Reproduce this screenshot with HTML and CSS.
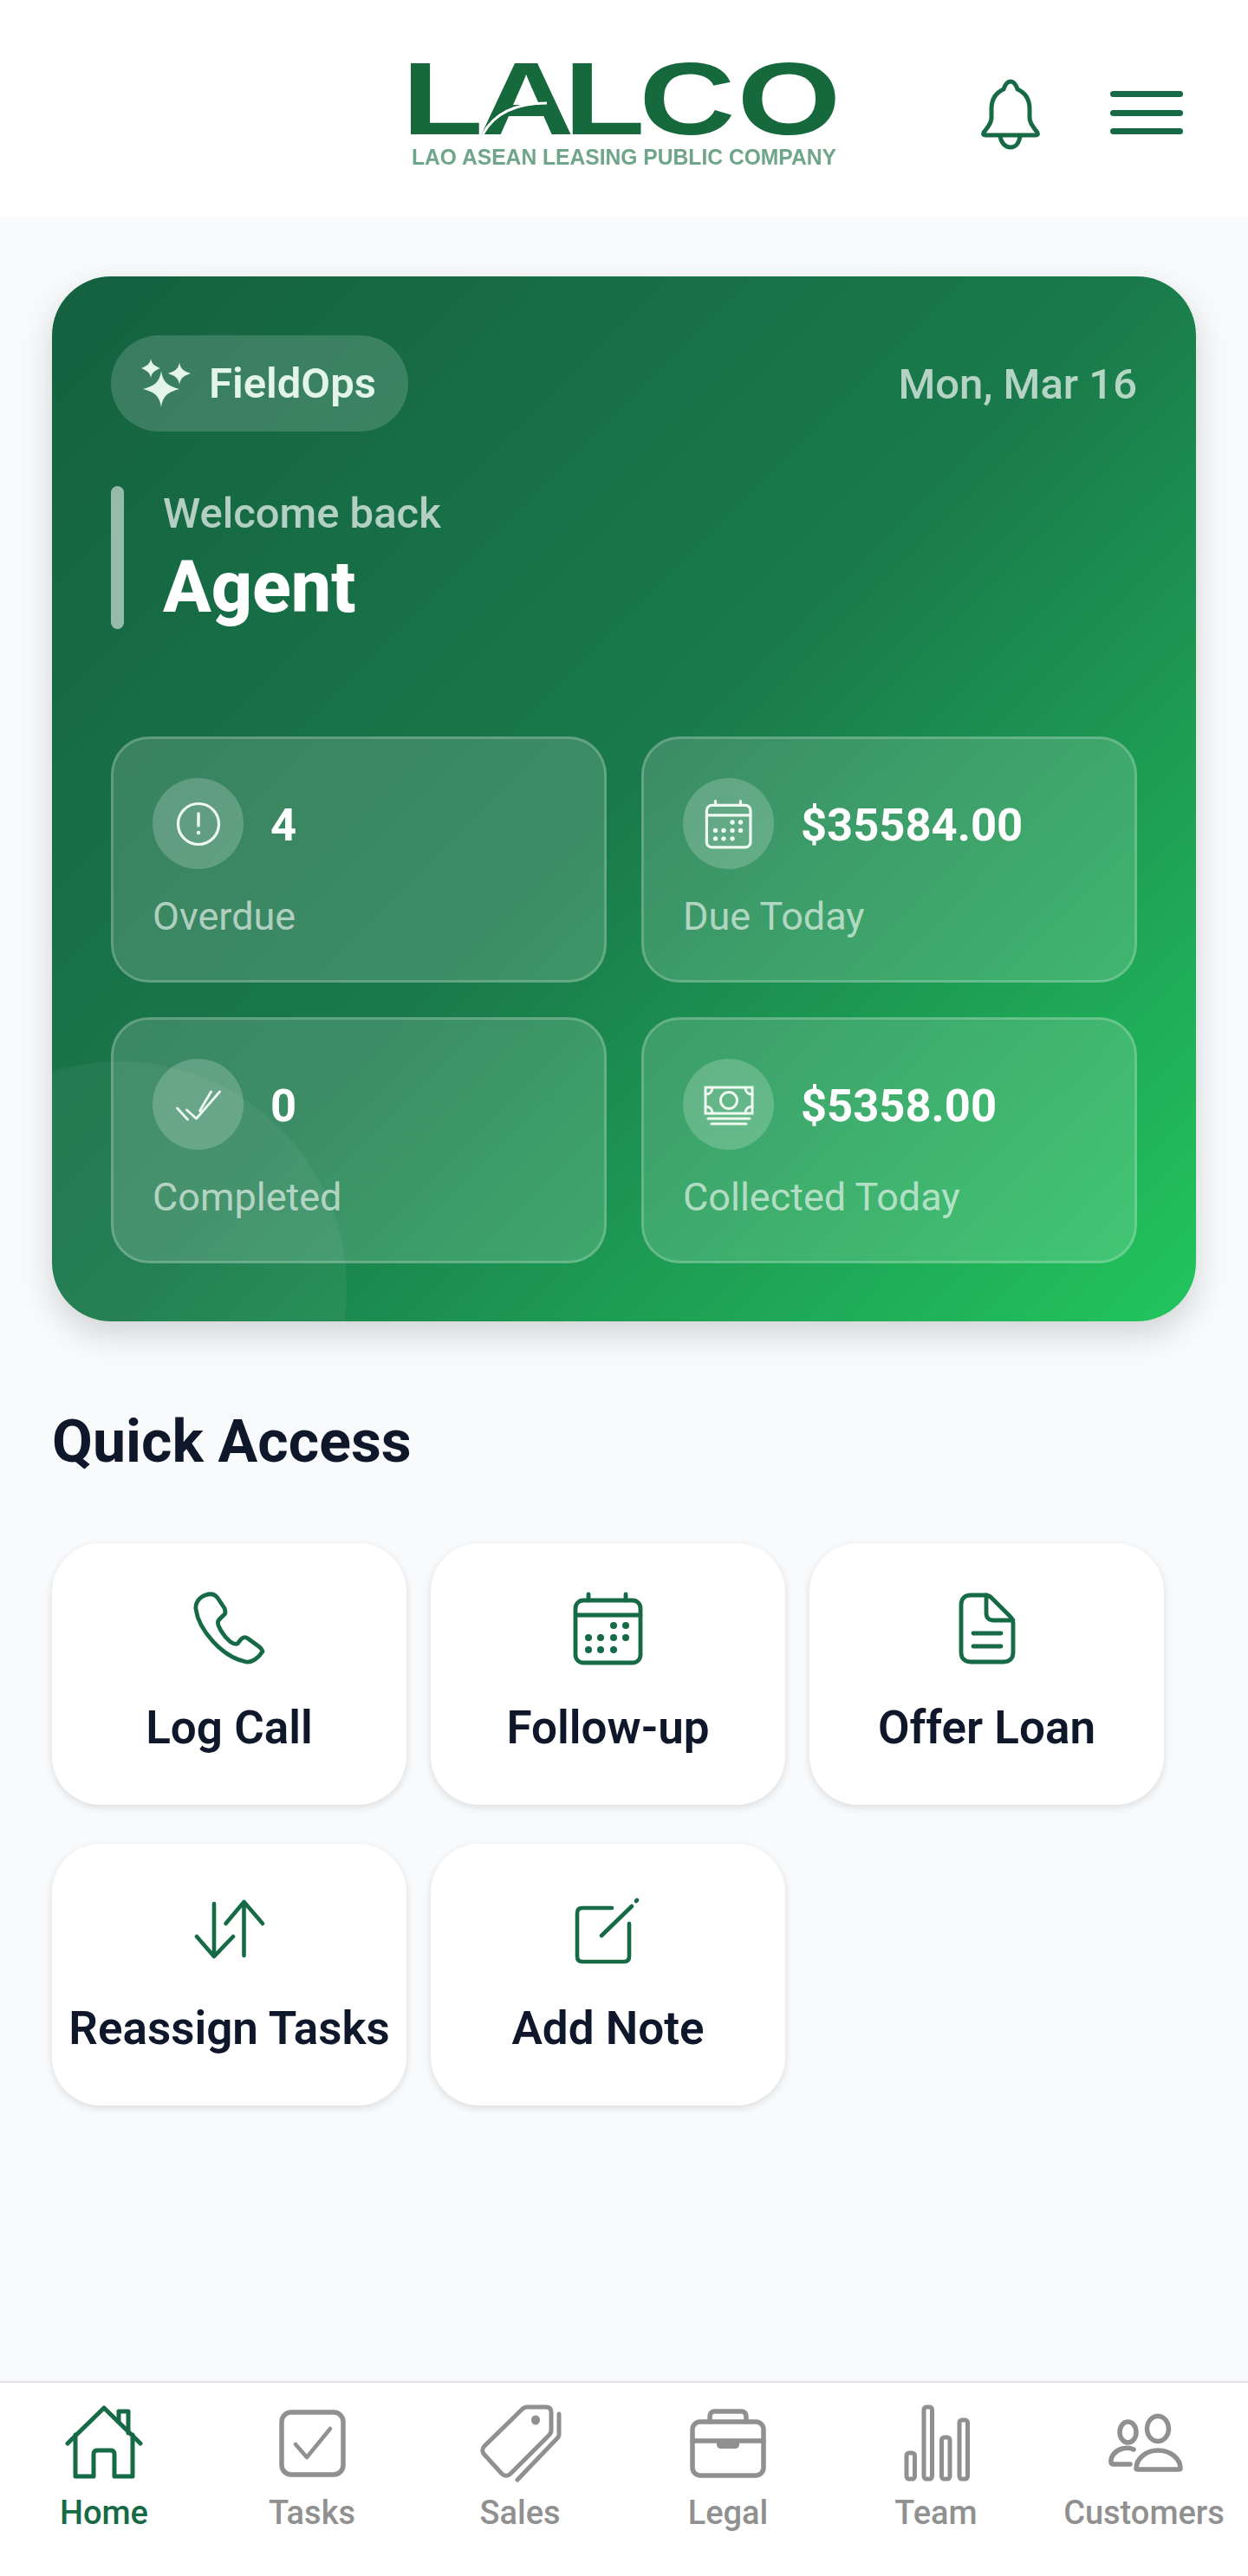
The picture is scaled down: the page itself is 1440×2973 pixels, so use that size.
FILE: index.html
```html
<!DOCTYPE html>
<html lang="en">
<head>
    <meta charset="UTF-8">
    <meta name="viewport" content="width=device-width, initial-scale=1.0">
    <title>LALCO FieldOps</title>
    <link rel="stylesheet" href="styles.css">
</head>
<body>
    <svg class="defs" width="0" height="0" aria-hidden="true">
        <symbol id="calendar" viewBox="0 0 92 92">
            <rect x="8" y="14" width="75" height="72" rx="9" fill="none" stroke="currentColor" stroke-width="4.8"/>
            <path d="M8 31H83M23 7V14M66 7V14" fill="none" stroke="currentColor" stroke-width="4.8" stroke-linecap="round"/>
            <g fill="currentColor">
                <circle cx="52" cy="43" r="4"/><circle cx="66" cy="43" r="4"/>
                <circle cx="23" cy="57" r="4"/><circle cx="37" cy="57" r="4"/><circle cx="52" cy="57" r="4"/><circle cx="66" cy="57" r="4"/>
                <circle cx="23" cy="71" r="4"/><circle cx="37" cy="71" r="4"/><circle cx="52" cy="71" r="4"/>
            </g>
        </symbol>
    </svg>

    <!-- Top bar -->
    <header class="topbar">
        <svg class="logo" viewBox="0 -30 490 160" width="490" height="160" role="img" aria-label="LALCO">
            <text class="logo-name" transform="scale(1.3 1)" x="-8.600 59 135 202 289" y="84">LALCO</text>
            <path d="M82 84C95 60 120 48 156 48" fill="none" stroke="#fff" stroke-width="3"/>
            <text class="logo-sub" x="0" y="119" textLength="490" lengthAdjust="spacingAndGlyphs">LAO ASEAN LEASING PUBLIC COMPANY</text>
        </svg>
        <svg class="bell" viewBox="0 0 70 84" width="70" height="84" fill="none" stroke="currentColor" stroke-width="5" stroke-linecap="round" stroke-linejoin="round">
            <path d="M35 4C31 4 29 7 27 13C18 17 13 24 13 36V46C13 53 8 57 4 63C3 65 4 66 6 66H64C66 66 67 65 66 63C62 57 57 53 57 46V36C57 24 52 17 43 13C41 7 39 4 35 4Z"/>
            <path d="M23 67C24 75 29 80 35 80C41 80 45 75 46 67"/>
        </svg>
        <div class="burger"><span></span><span></span><span></span></div>
    </header>

    <main class="content">
        <!-- Summary card -->
        <section class="hero">
            <div class="hero-top">
                <div class="pill">
                    <svg viewBox="0 0 60 60" width="60" height="60" fill="currentColor">
                        <path d="M23 15C25 27 29 32 44 36C29 40 25 45 23 57C21 45 17 40 2 36C17 32 21 27 23 15Z"/>
                        <path d="M44 5C45 12 48 15 57 18C48 21 45 24 44 31C43 24 40 21 31 18C40 15 43 12 44 5Z"/>
                        <path d="M11 1C12 7 15 9 22 12C15 15 12 17 11 23C10 17 7 15 0 12C7 9 10 7 11 1Z"/>
                    </svg>
                    <span>FieldOps</span>
                </div>
                <div class="date">Mon, Mar 16</div>
            </div>

            <div class="welcome">
                <div class="welcome-bar"></div>
                <div>
                    <div class="welcome-label">Welcome back</div>
                    <div class="welcome-name">Agent</div>
                </div>
            </div>

            <div class="stats">
                <div class="stat">
                    <div class="stat-row">
                        <div class="stat-icon">
                            <svg viewBox="0 0 60 60" width="60" height="60" fill="none" stroke="currentColor" stroke-width="3.2" stroke-linecap="round">
                                <circle cx="30" cy="30" r="23.5"/>
                                <path d="M30 18V32" stroke-width="3.5"/>
                                <circle cx="30" cy="40" r="1.5" fill="currentColor" stroke-width="1.5"/>
                            </svg>
                        </div>
                        <div class="stat-value">4</div>
                    </div>
                    <div class="stat-label">Overdue</div>
                </div>
                <div class="stat">
                    <div class="stat-row">
                        <div class="stat-icon">
                            <svg width="62" height="62"><use href="#calendar"/></svg>
                        </div>
                        <div class="stat-value">$35584.00</div>
                    </div>
                    <div class="stat-label">Due Today</div>
                </div>
                <div class="stat">
                    <div class="stat-row">
                        <div class="stat-icon">
                            <svg viewBox="0 0 60 60" width="60" height="60" fill="none" stroke="currentColor" stroke-width="2.8" stroke-linecap="round" stroke-linejoin="round">
                                <path d="M5.5 34L17.5 47M16.5 36L27.5 46L54.5 15M31.5 37L44.5 15"/>
                            </svg>
                        </div>
                        <div class="stat-value">0</div>
                    </div>
                    <div class="stat-label">Completed</div>
                </div>
                <div class="stat">
                    <div class="stat-row">
                        <div class="stat-icon">
                            <svg viewBox="0 0 60 60" width="60" height="60" fill="none" stroke="currentColor" stroke-width="3" stroke-linecap="round">
                                <rect x="3" y="10" width="54" height="30"/>
                                <circle cx="30" cy="25" r="9.5"/>
                                <path d="M3 18C8 18 11 15 11 10M57 18C52 18 49 15 49 10M3 32C8 32 11 35 11 40M57 32C52 32 49 35 49 40"/>
                                <path d="M6 46H54M10 52H50"/>
                            </svg>
                        </div>
                        <div class="stat-value">$5358.00</div>
                    </div>
                    <div class="stat-label">Collected Today</div>
                </div>
            </div>
        </section>

        <h2 class="section-title">Quick Access</h2>

        <div class="tiles">
            <div class="tile">
                <svg viewBox="0 0 92 92" width="92" height="92" fill="none" stroke="currentColor" stroke-width="4.8" stroke-linejoin="round">
                    <path d="M18 8C11 10 6 17 7 24C10 47 36 79 65 85C71 86 79 81 84 73C83 70 81 68 78 66L67 58C64 56 62 56 59 59L55 64C52 65 50 64 47 62C41 57 36 50 33 43C32 40 32 38 34 36L39 31C42 29 41 26 40 23L32 11C28 6 23 6 18 8Z"/>
                </svg>
                <span>Log Call</span>
            </div>
            <div class="tile">
                <svg width="92" height="92"><use href="#calendar"/></svg>
                <span>Follow-up</span>
            </div>
            <div class="tile">
                <svg viewBox="0 0 92 92" width="92" height="92" fill="none" stroke="currentColor" stroke-width="4.8" stroke-linecap="round" stroke-linejoin="round">
                    <path d="M27 8H44C47 8 49 9 51 11L72 32C75 35 76 37 76 40V74C76 81 72 85 65 85H27C20 85 16 81 16 74V19C16 12 20 8 27 8Z"/>
                    <path d="M45 8V29C45 34 48 37 53 37H76"/>
                    <path d="M30 52H62M30 67H62"/>
                </svg>
                <span>Offer Loan</span>
            </div>
            <div class="tile">
                <svg viewBox="0 0 92 92" width="92" height="92" fill="none" stroke="currentColor" stroke-width="4.6" stroke-linecap="round" stroke-linejoin="round">
                    <path d="M28 17V78M8 55L28 78L50 55"/>
                    <path d="M62.5 15V77M41.5 40L62.5 15L84 40"/>
                </svg>
                <span>Reassign Tasks</span>
            </div>
            <div class="tile">
                <svg viewBox="0 0 92 92" width="92" height="92" fill="none" stroke="currentColor" stroke-width="4.6" stroke-linecap="round" stroke-linejoin="round">
                    <path d="M50 22H16C12 22 10 24 10 28V78C10 82 12 84 16 84H64C68 84 70 82 70 78V40"/>
                    <path d="M38 54L73 20M78 14L79 13"/>
                </svg>
                <span>Add Note</span>
            </div>
        </div>
    </main>

    <!-- Bottom navigation -->
    <nav class="bottom-nav">
        <div class="nav-item active">
            <svg viewBox="0 0 96 96" width="96" height="96" fill="none" stroke="currentColor" stroke-width="5" stroke-linecap="round" stroke-linejoin="round">
                <path d="M6 48L48 7L90 48"/>
                <path d="M15 38V86H36V60C36 57 38 56 40 56H56C58 56 60 57 60 60V86H81V38"/>
                <path d="M65 23V11H76V36"/>
            </svg>
            <span>Home</span>
        </div>
        <div class="nav-item">
            <svg viewBox="0 0 96 96" width="96" height="96" fill="none" stroke="currentColor" stroke-width="5.500" stroke-linecap="round" stroke-linejoin="round">
                <rect x="13" y="12" width="71" height="72" rx="11"/>
                <path d="M29 49L42 64L69 31" stroke-width="4.500"/>
            </svg>
            <span>Tasks</span>
        </div>
        <div class="nav-item">
            <svg viewBox="0 0 96 96" width="96" height="96" fill="none" stroke="currentColor" stroke-width="5" stroke-linecap="round" stroke-linejoin="round">
                <path d="M56 6H78C82 6 84 8 84 12V33C84 36 83 37 81 39L37 83C34 86 30 86 27 83L7 61C4 58 4 54 7 51L50 9C52 7 54 6 56 6Z"/>
                <ellipse cx="66" cy="21" rx="5" ry="5.500" fill="currentColor" stroke="none"/>
                <path d="M93 14V38C93 40 92 41 91 42L45 90"/>
            </svg>
            <span>Sales</span>
        </div>
        <div class="nav-item">
            <svg viewBox="0 0 96 96" width="96" height="96" fill="none" stroke="currentColor" stroke-width="5.500" stroke-linecap="round" stroke-linejoin="round">
                <rect x="7" y="23" width="82" height="62" rx="9"/>
                <path d="M27 23V18C27 13 29 11 33 11H63C67 11 69 13 69 18V23"/>
                <path d="M7 45H89"/>
                <path d="M36 45H60V49C60 52 58 53 56 53H40C38 53 36 52 36 49Z" fill="currentColor" stroke-width="2"/>
            </svg>
            <span>Legal</span>
        </div>
        <div class="nav-item">
            <svg viewBox="0 0 96 96" width="96" height="96" fill="none" stroke="currentColor" stroke-width="5" stroke-linejoin="round">
                <rect x="14" y="59" width="9.500" height="30" rx="3"/>
                <rect x="34" y="6" width="9.500" height="83" rx="3"/>
                <rect x="54.500" y="41" width="9.500" height="48" rx="3"/>
                <rect x="75" y="21" width="9.500" height="68" rx="3"/>
            </svg>
            <span>Team</span>
        </div>
        <div class="nav-item">
            <svg viewBox="0 0 96 96" width="96" height="96" fill="none" stroke="currentColor" stroke-width="5.500" stroke-linecap="round" stroke-linejoin="round">
                <ellipse cx="29.500" cy="35" rx="9.500" ry="12"/>
                <ellipse cx="64" cy="31" rx="12.500" ry="14.500"/>
                <path d="M36 55C32 53 27 53 23 54C15 56 9 63 10 70C10 71 11 72 12 72H32"/>
                <path d="M39 77C39 65 51 56 64 56C78 56 90 65 90 77C90 78 89 78 88 78H41C40 78 39 78 39 77Z"/>
            </svg>
            <span>Customers</span>
        </div>
    </nav>
</body>
</html>
```

FILE: styles.css
```css
* {
    box-sizing: border-box;
}

body {
    margin: 0;
    height: 2973px;
    display: flex;
    flex-direction: column;
    font-family: Roboto, Arial, sans-serif;
    background-color: #f8fafc;
    color: #0f172a;
}

.defs {
    position: absolute;
}

/* top bar */
.topbar {
    height: 250px;
    display: flex;
    align-items: center;
    padding: 14px 0 0 475px;
    background: #fff;
    color: #166a45;
}

.logo {
    flex: none;
    margin: -30px 0 -8px;
    overflow: visible;
    filter: blur(0.6px);
}

.logo-name {
    font-family: "Liberation Sans", Arial, sans-serif;
    font-weight: 700;
    font-size: 118px;
    fill: #16693c;
}

.logo-sub {
    font-family: "Liberation Sans", Arial, sans-serif;
    font-weight: 700;
    font-size: 26px;
    fill: #6fa58a;
}

.bell {
    flex: none;
    margin-left: 166px;
}

.burger {
    width: 84px;
    margin: 0 0 4px 80px;
    display: flex;
    flex-direction: column;
    gap: 14.5px;
}

.burger span {
    height: 7px;
    border-radius: 4px;
    background: #166a45;
}

/* summary card */
.content {
    flex: 1;
    padding: 69px 60px 0;
}

.hero {
    position: relative;
    overflow: hidden;
    height: 1206px;
    padding: 68px;
    border-radius: 68px;
    background: linear-gradient(135deg, #14613f 0%, #1a7a4b 50%, #22c55e 100%);
    box-shadow: 0 15px 38px rgba(0, 0, 0, 0.16);
    color: #fff;
}

.hero::after {
    content: "";
    position: absolute;
    left: -185px;
    bottom: -225px;
    width: 525px;
    height: 525px;
    border-radius: 50%;
    background: rgba(255, 255, 255, 0.05);
}

.hero-top {
    display: flex;
    align-items: center;
    justify-content: space-between;
}

.pill {
    height: 111px;
    display: flex;
    align-items: center;
    gap: 18px;
    padding: 0 37px 0 35px;
    border-radius: 56px;
    background: rgba(255, 255, 255, 0.16);
    color: #e3f5ea;
    font-size: 49px;
    font-weight: 600;
}

.date {
    padding-top: 2px;
    font-size: 49px;
    font-weight: 500;
    color: rgba(255, 255, 255, 0.68);
}

.welcome {
    display: flex;
    align-items: center;
    gap: 45px;
    height: 165px;
    margin-top: 63px;
}

.welcome-bar {
    width: 15px;
    height: 165px;
    border-radius: 8px;
    background: rgba(255, 255, 255, 0.55);
}

.welcome-label {
    font-size: 49px;
    line-height: 67px;
    font-weight: 500;
    color: rgba(255, 255, 255, 0.68);
}

.welcome-name {
    font-size: 82.5px;
    line-height: 103px;
    font-weight: 800;
}

.stats {
    display: grid;
    grid-template-columns: 1fr 1fr;
    gap: 40px;
    margin-top: 124px;
}

.stat {
    position: relative;
    z-index: 1;
    height: 284px;
    padding: 45px;
    border: 3px solid rgba(255, 255, 255, 0.2);
    border-radius: 44px;
    background: rgba(255, 255, 255, 0.15);
}

.stat-row {
    display: flex;
    align-items: center;
    gap: 31px;
}

.stat-icon {
    width: 105px;
    height: 105px;
    display: flex;
    align-items: center;
    justify-content: center;
    border-radius: 50%;
    background: rgba(255, 255, 255, 0.2);
    color: #eef9f2;
}

.stat-value {
    padding-top: 3px;
    font-size: 52.5px;
    font-weight: 700;
}

.stat-label {
    margin-top: 28px;
    font-size: 45px;
    line-height: 53px;
    color: rgba(255, 255, 255, 0.62);
}

/* quick access */
.section-title {
    margin: 99px 0 77px;
    font-size: 68px;
    line-height: 80px;
    font-weight: 700;
}

.tiles {
    display: grid;
    grid-template-columns: repeat(3, 409px);
    column-gap: 28px;
    row-gap: 45px;
}

.tile {
    height: 302px;
    display: flex;
    flex-direction: column;
    align-items: center;
    gap: 38px;
    padding-top: 52px;
    border-radius: 56px;
    background: #fff;
    box-shadow: 0 3px 10px rgba(0, 0, 0, 0.12);
    color: #166a45;
}

.tile span {
    font-size: 53px;
    line-height: 62px;
    font-weight: 600;
    color: #0f172a;
    white-space: nowrap;
}

/* bottom navigation */
.bottom-nav {
    height: 225px;
    display: grid;
    grid-template-columns: repeat(6, 240px);
    padding-top: 22px;
    border-top: 2px solid #dfe1e4;
    background: #fff;
}

.nav-item {
    display: flex;
    flex-direction: column;
    align-items: center;
    gap: 10px;
    color: #909090;
}

.nav-item.active {
    color: #166a45;
}

.nav-item span {
    font-size: 38px;
    line-height: 44px;
    font-weight: 500;
}
```
